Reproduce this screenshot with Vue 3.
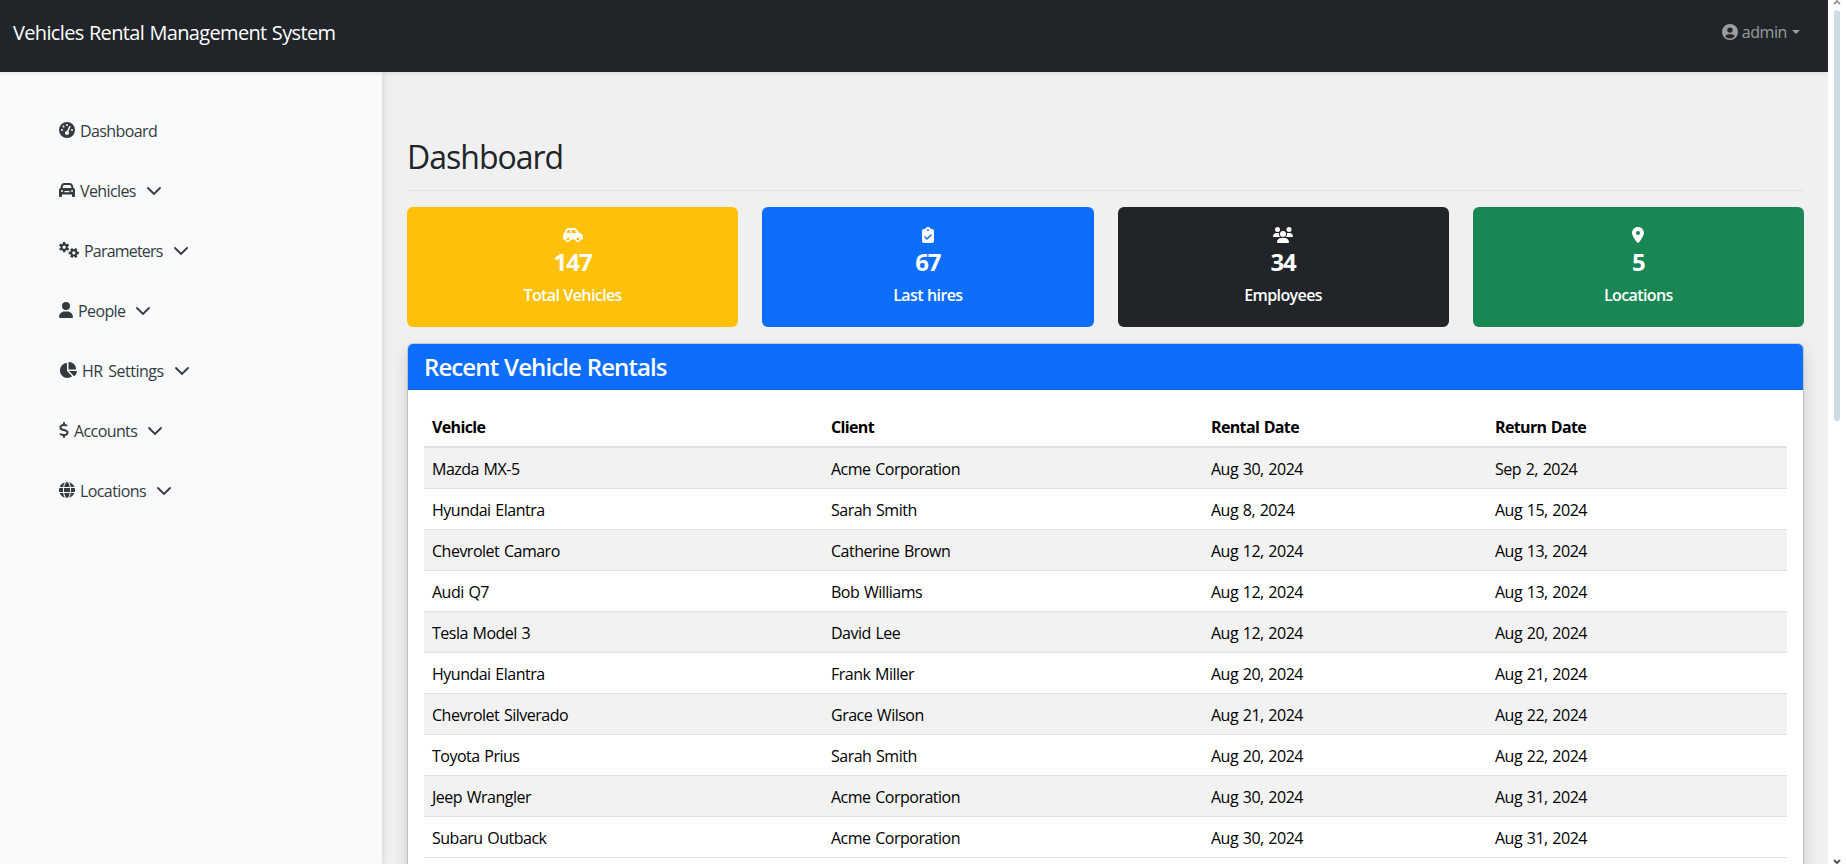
<script setup>
// Outline of a six-toothed gear with a round hole in its centre
function gear(cx, cy, turn) {
  const pts = []
  for (let i = 0; i < 6; i++) {
    const a = turn + i * 60
    for (const [off, r] of [[-21, 118], [-14, 168], [14, 168], [21, 118]]) {
      const t = ((a + off) * Math.PI) / 180
      pts.push(`${(cx + r * Math.cos(t)).toFixed(1)} ${(cy + r * Math.sin(t)).toFixed(1)}`)
    }
  }
  return `M${pts.join('L')}zM${cx - 52} ${cy}a52 52 0 1 0 104 0 52 52 0 1 0 -104 0z`
}
const icons = {
  gauge: { w: 512, d: 'M0 256a256 256 0 1 1 512 0A256 256 0 1 1 0 256zM288 96a32 32 0 1 0 -64 0 32 32 0 1 0 64 0zM256 416c35.3 0 64-28.700 64-64c0-17.400-6.900-33.100-18.100-44.600L366 161.700c5.300-12.100-.2-26.300-12.300-31.600s-26.300 .2-31.600 12.300L257.900 288c-.6 0-1.300 0-1.900 0c-35.300 0-64 28.700-64 64s28.700 64 64 64zM176 144a32 32 0 1 0 -64 0 32 32 0 1 0 64 0zM96 288a32 32 0 1 0 0-64 32 32 0 1 0 0 64zm352-32a32 32 0 1 0 -64 0 32 32 0 1 0 64 0z' },
  car: { w: 512, d: 'M135.200 117.400L109.100 192H402.900l-26.100-74.600C372.300 104.600 360.200 96 346.600 96H165.400c-13.600 0-25.700 8.600-30.200 21.400zM39.600 196.800L74.800 96.300C88.300 57.800 124.600 32 165.400 32H346.600c40.800 0 77.100 25.800 90.600 64.300l35.200 100.500c23.200 9.600 39.600 32.500 39.600 59.200V400v48c0 17.700-14.300 32-32 32H448c-17.700 0-32-14.300-32-32V400H96v48c0 17.700-14.300 32-32 32H32c-17.700 0-32-14.300-32-32V400 256c0-26.700 16.400-49.600 39.600-59.200zM128 288a32 32 0 1 0 -64 0 32 32 0 1 0 64 0zm288 32a32 32 0 1 0 0-64 32 32 0 1 0 0 64zM176 288h160v40H176z' },
  user: { w: 448, d: 'M224 256A128 128 0 1 0 224 0a128 128 0 1 0 0 256zm-45.700 48C79.800 304 0 383.800 0 482.300C0 498.700 13.300 512 29.700 512H418.300c16.400 0 29.700-13.300 29.700-29.700C448 383.800 368.200 304 269.700 304H178.300z' },
  pie: { w: 576, d: 'M304 240V16.600c0-9 7-16.600 16-16.600C443.700 0 544 100.300 544 224c0 9-7.600 16-16.600 16H304zM32 272C32 150.700 122.100 50.300 239 34.300c9.200-1.300 17 6.100 17 15.400V288L412.500 444.500c6.700 6.700 6.200 17.700-1.500 23.100C371.800 495.600 323.800 512 272 512C139.500 512 32 404.600 32 272zm526.400 16c9.300 0 16.600 7.800 15.400 17c-7.700 55.900-34.600 105.600-73.900 142.300c-6 5.600-15.400 5.200-21.200-.7L320 288H558.400z' },
  dollar: { w: 320, d: 'M160 0c17.700 0 32 14.300 32 32V67.700c1.600 .2 3.100 .4 4.700 .7c.4 .1 .7 .1 1.100 .2l48 8.800c17.400 3.200 28.900 19.900 25.700 37.200s-19.900 28.900-37.200 25.700l-47.500-8.700c-31.300-4.600-58.900-1.500-78.300 6.200s-27.200 18.300-29 28.100c-2 10.700-.5 16.700 1.200 20.400c1.800 3.900 5.500 8.300 12.800 13.200c16.300 10.700 41.300 17.700 73.700 26.300l2.900 .8c28.600 7.600 63.600 16.800 89.600 33.800c14.200 9.300 27.600 21.900 35.900 39.500c8.500 17.900 10.300 37.900 6.400 59.200c-6.900 38-33.100 63.400-65.600 76.700c-13.700 5.600-28.600 9.200-44.400 11V480c0 17.700-14.300 32-32 32s-32-14.300-32-32V445.100c-.4-.1-.9-.1-1.300-.2l-.2 0c-24.400-3.800-64.500-14.300-91.500-26.300c-16.100-7.200-23.400-26.100-16.200-42.200s26.100-23.400 42.200-16.200c20.900 9.300 55.300 18.500 75.200 21.600c31.900 4.700 58.200 2 76-5.300c16.900-6.900 24.600-16.900 26.800-28.900c1.900-10.600 .4-16.700-1.300-20.400c-1.900-4-5.600-8.400-13-13.300c-16.400-10.700-41.500-17.700-74-26.300l-2.800-.7c-28.700-7.600-63.700-16.900-89.600-33.900c-14.200-9.300-27.500-22-35.800-39.600c-8.400-17.900-10.100-37.900-6.100-59.200C23.700 116 52.300 91.200 84.800 78.300c13.300-5.300 27.900-8.900 43.200-11V32c0-17.700 14.300-32 32-32z' },
  globe: { w: 512, d: 'M352 256c0 22.200-1.200 43.600-3.300 64H163.300c-2.200-20.400-3.300-41.800-3.300-64s1.200-43.600 3.300-64H348.700c2.200 20.400 3.300 41.800 3.300 64zm28.800-64H503.900c5.300 20.500 8.100 41.900 8.100 64s-2.800 43.500-8.100 64H380.800c2.100-20.600 3.200-42 3.200-64s-1.100-43.400-3.200-64zm112.600-32H376.700c-10-63.900-29.800-117.400-55.300-151.600c78.300 20.700 142 77.500 171.900 151.600zm-149.100 0H167.700c6.100-36.400 15.500-68.600 27-94.700c10.500-23.600 22.200-40.700 33.500-51.500C239.400 3.200 248.700 0 256 0s16.600 3.200 27.800 13.800c11.300 10.800 23 27.900 33.500 51.500c11.600 26 20.900 58.200 27 94.700zm-209 0H18.600C48.600 85.900 112.200 29.100 190.600 8.400C165.100 42.600 145.300 96.100 135.300 160zM8.100 192H131.200c-2.100 20.600-3.200 42-3.200 64s1.100 43.400 3.200 64H8.100C2.800 299.500 0 278.100 0 256s2.800-43.500 8.100-64zM194.700 446.600c-11.600-26-20.900-58.200-27-94.600H344.300c-6.100 36.400-15.500 68.600-27 94.600c-10.500 23.600-22.200 40.700-33.500 51.500C272.600 508.800 263.300 512 256 512s-16.600-3.200-27.800-13.800c-11.300-10.800-23-27.900-33.500-51.500zM135.300 352c10 63.900 29.800 117.400 55.300 151.600C112.200 482.900 48.600 426.100 18.600 352H135.300zm358.100 0c-30 74.100-93.600 130.900-171.900 151.600c25.500-34.200 45.200-87.700 55.300-151.600H493.400z' },
  gears: { w: 640, d: gear(164, 166, 30) + gear(474, 350, 0) },
  carSide: { w: 640, d: 'M171.300 96H224v96H111.300l30.400-75.900C146.500 104 158.200 96 171.300 96zM272 192V96h81.200c9.700 0 18.900 4.400 25 12l67 84H272zm256.200 1L428.200 68c-18.200-22.800-45.800-36-75-36H171.300c-39.300 0-74.600 23.900-89.100 60.300L40.600 196.400C16.800 205.800 0 228.900 0 256V368c0 17.700 14.300 32 32 32H65.300c7.600 45.400 47.100 80 94.700 80s87.100-34.600 94.700-80H385.300c7.600 45.400 47.100 80 94.700 80s87.100-34.600 94.700-80H608c17.700 0 32-14.300 32-32V320c0-65.200-48.800-119-111.800-127zM434.700 368a48 48 0 1 1 90.500 32 48 48 0 1 1 -90.500-32zM160 336a48 48 0 1 1 0 96 48 48 0 1 1 0-96z' },
  clipboard: { w: 384, d: 'M192 0c-41.800 0-77.400 26.700-90.500 64H64C28.700 64 0 92.700 0 128V448c0 35.300 28.700 64 64 64H320c35.300 0 64-28.700 64-64V128c0-35.300-28.700-64-64-64H282.500C269.400 26.700 233.800 0 192 0zm0 64a32 32 0 1 1 0 64 32 32 0 1 1 0-64zM305 273L177 401c-9.400 9.400-24.600 9.400-33.900 0L79 337c-9.400-9.400-9.400-24.600 0-33.900s24.600-9.400 33.900 0l47 47L271 239c9.400-9.400 24.600-9.400 33.900 0s9.400 24.600 0 33.900z' },
  users: { w: 640, d: 'M144 0a80 80 0 1 1 0 160A80 80 0 1 1 144 0zM512 0a80 80 0 1 1 0 160A80 80 0 1 1 512 0zM0 298.700C0 239.800 47.800 192 106.700 192h42.700c15.900 0 31 3.500 44.600 9.700c-1.300 7.200-1.900 14.700-1.900 22.300c0 38.200 16.800 72.500 43.300 96H21.300C9.600 320 0 310.400 0 298.700zM405.300 320c26.600-23.500 43.300-57.800 43.300-96c0-7.600-.7-15-1.900-22.300c13.600-6.300 28.700-9.700 44.600-9.700h42.700C592.200 192 640 239.800 640 298.700c0 11.800-9.600 21.300-21.300 21.300H405.300zM224 224a96 96 0 1 1 192 0 96 96 0 1 1 -192 0zM128 485.300C128 411.700 187.700 352 261.300 352H378.700C452.300 352 512 411.700 512 485.300c0 14.700-11.900 26.700-26.700 26.700H154.700c-14.700 0-26.700-11.900-26.700-26.700z' },
  pin: { w: 384, d: 'M215.700 499.200C267 435 384 279.400 384 192C384 86 298 0 192 0S0 86 0 192c0 87.400 117 243 168.300 307.200c12.300 15.300 35.100 15.300 47.400 0zM192 128a64 64 0 1 1 0 128 64 64 0 1 1 0-128z' },
}
const menu = [
  { label: 'Dashboard', icon: 'gauge' },
  { label: 'Vehicles', icon: 'car', open: true },
  { label: 'Parameters', icon: 'gears', open: true },
  { label: 'People', icon: 'user', open: true },
  { label: 'HR Settings', icon: 'pie', open: true },
  { label: 'Accounts', icon: 'dollar', open: true },
  { label: 'Locations', icon: 'globe', open: true },
]
const cards = [
  { n: '147', label: 'Total Vehicles', icon: 'carSide', tone: 'warning' },
  { n: '67', label: 'Last hires', icon: 'clipboard', tone: 'primary' },
  { n: '34', label: 'Employees', icon: 'users', tone: 'dark' },
  { n: '5', label: 'Locations', icon: 'pin', tone: 'success' },
]
const rows = [
  ['Mazda MX-5', 'Acme Corporation', 'Aug 30, 2024', 'Sep 2, 2024'],
  ['Hyundai Elantra', 'Sarah Smith', 'Aug 8, 2024', 'Aug 15, 2024'],
  ['Chevrolet Camaro', 'Catherine Brown', 'Aug 12, 2024', 'Aug 13, 2024'],
  ['Audi Q7', 'Bob Williams', 'Aug 12, 2024', 'Aug 13, 2024'],
  ['Tesla Model 3', 'David Lee', 'Aug 12, 2024', 'Aug 20, 2024'],
  ['Hyundai Elantra', 'Frank Miller', 'Aug 20, 2024', 'Aug 21, 2024'],
  ['Chevrolet Silverado', 'Grace Wilson', 'Aug 21, 2024', 'Aug 22, 2024'],
  ['Toyota Prius', 'Sarah Smith', 'Aug 20, 2024', 'Aug 22, 2024'],
  ['Jeep Wrangler', 'Acme Corporation', 'Aug 30, 2024', 'Aug 31, 2024'],
  ['Subaru Outback', 'Acme Corporation', 'Aug 30, 2024', 'Aug 31, 2024'],
]
</script>

<template>
  <div class="page">
    <div class="app">
      <header class="topbar">
        <a class="brand">Vehicles Rental Management System</a>
        <a class="account">
          <svg class="avatar" viewBox="0 0 16 16"><path fill-rule="evenodd" d="M8 0a8 8 0 1 1 0 16A8 8 0 0 1 8 0zM8 3.400a2.700 2.700 0 1 0 0 5.400 2.700 2.700 0 0 0 0-5.400zM3.300 12.400a6.200 6.200 0 0 0 9.400 0C12.100 11 11 10.300 9.500 10.300h-3C5 10.300 3.900 11 3.300 12.400z" /></svg>
          <span>admin</span><i class="caret"></i>
        </a>
      </header>
      <div class="body">
        <nav class="sidebar">
          <a v-for="m in menu" :key="m.label" class="item" :class="m.icon">
            <svg class="icon" :viewBox="`0 0 ${icons[m.icon].w} 512`" :style="{ width: icons[m.icon].w / 32 + 'px' }"><path fill-rule="evenodd" :d="icons[m.icon].d" /></svg>
            <span class="label">{{ m.label }}</span>
            <svg v-if="m.open" class="chevron" viewBox="0 0 14 8"><path d="M1 1l6 6 6-6" /></svg>
          </a>
        </nav>
        <main class="main">
          <h2>Dashboard</h2>
          <div class="cards">
            <div v-for="c in cards" :key="c.label" class="card" :class="c.tone">
              <svg class="card-icon" :viewBox="`0 0 ${icons[c.icon].w} 512`"><path fill-rule="evenodd" :d="icons[c.icon].d" /></svg>
              <strong>{{ c.n }}</strong>
              <span>{{ c.label }}</span>
            </div>
          </div>
          <section class="panel">
            <h4>Recent Vehicle Rentals</h4>
            <div class="panel-body">
              <table>
                <colgroup><col class="c1" /><col class="c2" /><col class="c3" /><col class="c4" /></colgroup>
                <thead><tr><th>Vehicle</th><th>Client</th><th>Rental Date</th><th>Return Date</th></tr></thead>
                <tbody>
                  <tr v-for="(r, i) in rows" :key="i"><td v-for="(v, j) in r" :key="j">{{ v }}</td></tr>
                </tbody>
              </table>
            </div>
          </section>
        </main>
      </div>
    </div>
    <aside class="scrollbar">
      <svg class="arrow up" viewBox="0 0 8 5"><path d="M1 4l3-3 3 3" /></svg>
      <i class="thumb"></i>
      <svg class="arrow down" viewBox="0 0 8 5"><path d="M1 1l3 3 3-3" /></svg>
    </aside>
  </div>
</template>

<style>
body { overflow: hidden; }
</style>
<style scoped>
* { box-sizing: border-box; }
.page { display: flex; width: 1846px; height: 864px; overflow: hidden; background: #fff; color: #212529; font: 400 16px/24px "Segoe UI", "Open Sans", "Noto Sans", sans-serif; }
.app { width: 1828px; height: 864px; overflow: hidden; display: flex; flex-direction: column; background: #f0f0f0; }
.topbar { height: 72px; flex: none; background: #212529; display: flex; justify-content: space-between; padding: 0 28px 0 13px; box-shadow: 0 2px 4px rgba(0,0,0,.08); position: relative; }
.brand { color: #fff; font-size: 20px; line-height: 30px; padding-top: 18px; letter-spacing: -.65px; word-spacing: .7px; }
.account { display: flex; align-items: center; height: 24px; margin-top: 20px; color: #9b9d9e; letter-spacing: -.4px; }
.avatar { width: 16px; height: 16px; margin-right: 4px; fill: currentColor; }
.caret { border: 4px solid transparent; border-top-color: currentColor; border-bottom: 0; margin-left: 5px; }
.body { flex: 1; display: flex; min-height: 0; }
.sidebar { width: 382px; flex: none; background: #f8fafc; box-shadow: 2px 0 5px rgba(0,0,0,.1); padding: 28px 0 0 59px; }
.item { display: flex; align-items: center; height: 60px; color: #343a40; letter-spacing: -.6px; }
.item.gears { letter-spacing: -.8px; }
.item.pie { letter-spacing: -.5px; word-spacing: 2px; }
.icon { height: 16px; fill: currentColor; flex: none; overflow: visible; }
.label { margin-left: 5px; padding-top: 1px; }
.chevron { width: 14px; height: 8px; margin-left: 11px; margin-top: 1px; fill: none; stroke: currentColor; stroke-width: 1.8; stroke-linecap: round; overflow: visible; }
.main { flex: 1; min-width: 0; padding: 64px 24px 0 25px; }
h2 { margin: 0 0 16px; height: 55px; padding-top: 2px; border-bottom: 1px solid #dee2e6; font-weight: 500; font-size: 32px; line-height: 38px; letter-spacing: -1px; }
.cards { display: grid; grid-template-columns: repeat(4, 1fr); gap: 24px; margin-bottom: 16px; }
.card { height: 120px; border-radius: 6px; color: #fff; display: flex; flex-direction: column; align-items: center; padding-top: 20px; font-weight: 600; letter-spacing: -.6px; word-spacing: .5px; }
.card strong { font-size: 24px; font-weight: 700; line-height: 29px; margin: 4px 0 7px; letter-spacing: -1px; }
.card-icon { height: 16px; width: 20px; fill: currentColor; }
.warning { background: #ffc107; }
.primary { background: #0d6efd; }
.dark { background: #212529; }
.success { background: #198754; }
.panel { height: 700px; border: 1px solid rgba(0,0,0,.13); border-radius: 6px; background: #fff; background-clip: padding-box; box-shadow: 0 8px 16px rgba(0,0,0,.15); }
h4 { margin: 0; height: 46px; background: #0d6efd; border-bottom: 1px solid #0b5ed7; border-radius: 5px 5px 0 0; color: #fff; font-weight: 600; font-size: 24px; line-height: 29px; padding: 8px 16px; letter-spacing: -.9px; word-spacing: .5px; }
.panel-body { padding: 16px; }
table { width: 1363px; table-layout: fixed; border-collapse: separate; border-spacing: 0; color: #000; letter-spacing: -.5px; word-spacing: 1px; }
.c1 { width: 399px; } .c2 { width: 380px; } .c3 { width: 284px; } .c4 { width: 300px; }
th, td { padding: 9px 8px 7px; text-align: left; border-bottom: 1px solid #dee2e6; }
th { font-weight: 700; border-bottom-width: 2px; letter-spacing: -.65px; }
tbody tr:nth-child(odd) td { background: #f2f2f2; }
.scrollbar { width: 18px; height: 864px; display: flex; flex-direction: column; align-items: center; padding-right: 0; }
.arrow { width: 8px; height: 5px; fill: none; stroke: #999; stroke-width: 2; }
.thumb { width: 6px; height: 411px; margin-top: 5px; border-radius: 3px; background: #cfdbe5; }
.down { margin-top: auto; stroke: #555; }
</style>
